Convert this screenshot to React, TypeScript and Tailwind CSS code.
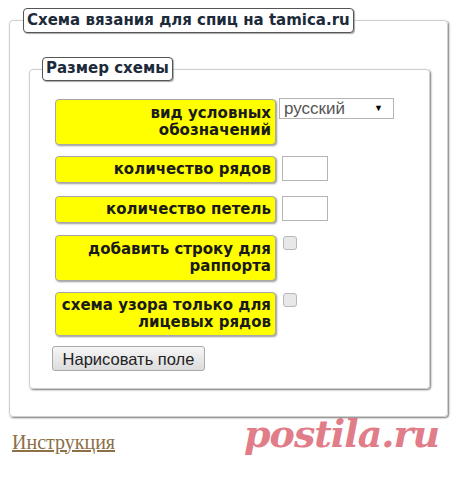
export default function App() {
  const labelCls =
    "w-[221px] bg-[#ffff00] border border-[#a8a8a8] rounded-[4px] shadow-[1px_1px_2px_#999] text-right pr-[4px] py-[4px] text-[15px] leading-[17px] font-bold text-[#1a1a1a]";

  return (
    <div className="relative w-[460px] h-[477px] bg-white font-['DejaVu_Sans',sans-serif] overflow-hidden">
      <div className="pl-[9px] pt-[8px] w-[448px]">
        <fieldset className="border border-[#cfcfcf] rounded-[4px] shadow-[1px_1px_2px_#777] px-[13px] pt-[24px] pb-[27px]">
          <legend className="border border-[#555] rounded-[4px] bg-white px-[3px] h-[25px] leading-[22px] text-[15px] font-bold text-[#1c2a3a] shadow-[1px_1px_1px_#aaa]">
            Схема вязания для спиц на tamica.ru
          </legend>

          <fieldset className="ml-[6px] mr-[4px] border border-[#cfcfcf] rounded-[4px] shadow-[1px_1px_2px_#777] pl-[12px] pr-[12px] pt-[18px] pb-[16px]">
            <legend className="border border-[#555] rounded-[4px] bg-white px-[3px] h-[24px] leading-[21px] text-[15px] font-bold text-[#1c2a3a] shadow-[1px_1px_1px_#aaa]">
              Размер схемы
            </legend>

            <div className="ml-[13px] flex flex-col">
              <div className="flex items-start">
                <div className={labelCls + " py-[5px]"}>
                  вид условных
                  <br />
                  обозначений
                </div>
                <div className="ml-[3px] mt-[-1px] w-[115px] h-[21px] border border-[#b5b5b5] bg-white flex items-center justify-between pl-[4px] pr-[10px] font-['Liberation_Sans',sans-serif] text-[17px] leading-[19px] text-[#555]">
                  <span>русский</span>
                  <span className="text-[9px] text-black">▼</span>
                </div>
              </div>

              <div className="mt-[11px] flex items-start">
                <div className={labelCls}>количество рядов</div>
                <div className="ml-[6px] w-[46px] h-[25px] border border-[#b5b5b5] bg-white" />
              </div>

              <div className="mt-[13px] flex items-start">
                <div className={labelCls}>количество петель</div>
                <div className="ml-[6px] w-[46px] h-[25px] border border-[#b5b5b5] bg-white" />
              </div>

              <div className="mt-[12px] flex items-start">
                <div className={labelCls + " py-[5px]"}>
                  добавить строку для
                  <br />
                  раппорта
                </div>
                <div className="ml-[7px] mt-[1px] w-[14px] h-[14px] border border-[#b8b8b8] rounded-[3px] bg-[#e8e8e8]" />
              </div>

              <div className="mt-[11px] flex items-start">
                <div className={labelCls}>
                  схема узора только для
                  <br />
                  лицевых рядов
                </div>
                <div className="ml-[7px] mt-[1px] w-[14px] h-[14px] border border-[#b8b8b8] rounded-[3px] bg-[#e8e8e8]" />
              </div>
            </div>

            <button className="mt-[10px] ml-[10px] w-[153px] h-[25px] border border-[#a9a9a9] rounded-[3px] bg-gradient-to-b from-[#f6f6f6] to-[#dcdcdc] font-['Liberation_Sans',sans-serif] text-[16.5px] leading-[20px] text-[#222]">
              Нарисовать поле
            </button>
          </fieldset>
        </fieldset>
      </div>

      <div className="pl-[12px] pt-[10px]">
        <a
          href="#"
          className="font-['Liberation_Serif',serif] text-[20px] text-[#8c7048] underline"
        >
          Инструкция
        </a>
      </div>

      <div className="absolute left-[244px] top-[408px] font-['DejaVu_Serif',serif] italic font-bold text-[38px] leading-[52px] text-[#de6f7c] opacity-90 tracking-[-1px]">
        postila.ru
      </div>
    </div>
  );
}
